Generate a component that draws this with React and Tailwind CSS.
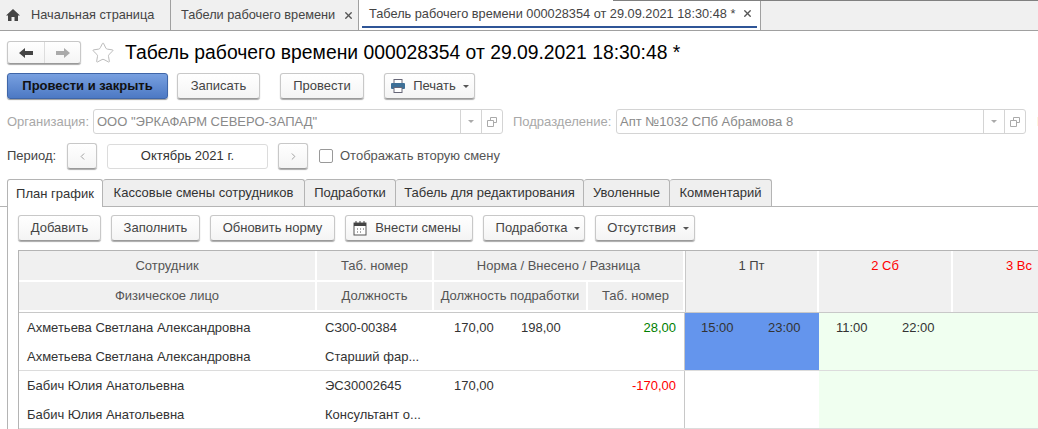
import React from 'react';
import { Star, X, ChevronLeft, ChevronRight } from 'lucide-react';

const Caret = () => (
  <span className="ml-[7px] h-0 w-0 border-x-[3px] border-t-[3px] border-x-transparent border-t-[#555]" />
);

const Btn = ({ w, children, caret }) => (
  <button className={`flex h-[26px] shrink-0 items-center justify-center rounded-[3px] border border-[#c8c8c8] border-b-[#9a9a9a] bg-gradient-to-b from-white to-[#f4f4f4] text-[#444] shadow-[0_1px_1px_#aaa] ${w}`}>
    {children}
    {caret && <Caret />}
  </button>
);

const PrinterIcon = () => (
  <svg width="16" height="14" viewBox="0 0 16 14" className="mr-[7px]">
    <rect x="4" y="0.5" width="8" height="4" fill="#fff" stroke="#667" />
    <rect x="1" y="4" width="14" height="6" rx="1" fill="#3d6f96" />
    <rect x="4" y="8.5" width="8" height="5" fill="#fff" stroke="#667" />
  </svg>
);

const CalendarIcon = () => (
  <svg width="14" height="15" viewBox="0 0 14 15" className="mr-[8px]">
    <rect x="1" y="2" width="12" height="12" fill="#fff" stroke="#555" />
    <rect x="1" y="2" width="12" height="3" fill="#444" />
    <path d="M3 0v3M7 0v3M11 0v3" stroke="#444" strokeWidth="1" />
    <path d="M4 8h1M7 8h1M10 8h1M4 11h1M7 11h1" stroke="#555" strokeWidth="1" />
  </svg>
);

const OpenIcon = () => (
  <svg width="10" height="10" viewBox="0 0 10 10">
    <path d="M3.5 3V.5h6v5H7M.5 3.5h6v6h-6z" fill="none" stroke="#aaa" />
  </svg>
);

const NavArrow = ({ flip, color }) => (
  <svg width="14" height="10" viewBox="0 0 14 10" className={flip ? 'rotate-180' : ''}>
    <path d="M0 5 6 0v3h8v4H6v3z" fill={color} />
  </svg>
);

const Field = ({ w, text }) => (
  <div className={`flex h-[25px] shrink-0 items-center rounded-[3px] border border-[#d4d4d4] text-[#8a8a8a] ${w}`}>
    <span className="flex-1 pl-[3px]">{text}</span>
    <span className="flex h-full w-[21px] items-center justify-center border-l border-[#d4d4d4]">
      <span className="h-0 w-0 border-x-[3px] border-t-[3px] border-x-transparent border-t-[#aaa]" />
    </span>
    <span className="flex h-full w-[21px] items-center justify-center border-l border-[#d4d4d4]">
      <OpenIcon />
    </span>
  </div>
);

const tabs = [
  ['План график', 'w-[96px]'],
  ['Кассовые смены сотрудников', 'w-[202px]'],
  ['Подработки', 'w-[91px]'],
  ['Табель для редактирования', 'w-[188px]'],
  ['Уволенные', 'w-[86px]'],
  ['Комментарий', 'w-[102px]'],
];

const Head = ({ className = '', children }) => (
  <div className={`flex items-center justify-center border-r-2 border-b-2 border-white bg-[#f0f0f0] text-[#555] ${className}`}>
    {children}
  </div>
);

const rows = [
  {
    name: 'Ахметьева Светлана Александровна',
    num: 'СЗ00-00384',
    job: 'Старший фар...',
    norm: '170,00',
    done: '198,00',
    diff: '28,00',
    diffColor: 'text-[#008000]',
    day1: 'bg-[#6495ed]',
    times: true,
  },
  {
    name: 'Бабич Юлия Анатольевна',
    num: 'ЭС30002645',
    job: 'Консультант о...',
    norm: '170,00',
    done: '',
    diff: '-170,00',
    diffColor: 'text-[#ff0000]',
    day1: 'bg-white',
    times: false,
  },
];

const Row = ({ r }) => (
  <div className="flex h-[58px] border-b border-[#dcdcdc] text-[#333]">
    <div className="flex w-[298px] flex-col pl-[8px]">
      <span className="mt-[6px] leading-[17px]">{r.name}</span>
      <span className="mt-[12px] leading-[17px]">{r.name}</span>
    </div>
    <div className="flex w-[118px] flex-col pl-[8px]">
      <span className="mt-[6px] leading-[17px]">{r.num}</span>
      <span className="mt-[12px] leading-[17px]">{r.job}</span>
    </div>
    <div className="flex w-[250px] border-r border-[#c8c8c8]">
      <span className="mt-[6px] w-[60px] pl-[19px] leading-[17px]">{r.norm}</span>
      <span className="mt-[6px] w-[90px] pl-[26px] leading-[17px]">{r.done}</span>
      <span className={`mt-[6px] w-[99px] pr-[8px] text-right leading-[17px] ${r.diffColor}`}>{r.diff}</span>
    </div>
    <div className={`flex w-[134px] shrink-0 ${r.day1}`}>
      {r.times && (
        <>
          <span className="mt-[6px] w-[66px] pl-[16px] leading-[17px]">15:00</span>
          <span className="mt-[6px] pl-[17px] leading-[17px]">23:00</span>
        </>
      )}
    </div>
    <div className="flex flex-1 bg-[#f0fff0]">
      {r.times && (
        <>
          <span className="mt-[6px] w-[66px] pl-[17px] leading-[17px]">11:00</span>
          <span className="mt-[6px] pl-[17px] leading-[17px]">22:00</span>
        </>
      )}
    </div>
  </div>
);

export default function App() {
  return (
    <div className="h-[429px] w-[1038px] overflow-hidden bg-white font-['Liberation_Sans',Arial,sans-serif] text-[13px]">
      {/* Вкладки окна */}
      <div className="relative flex h-[31px] border-b border-[#a0a0a0] bg-[#f0f0f0] text-[12.75px] text-[#444]">
        <div className="absolute top-0 right-0 h-px w-[425px] bg-[#808080]" />
        <div className="flex w-[171px] items-center border-r border-[#a0a0a0] pl-[6px]">
          <svg width="14" height="12" viewBox="0 0 14 12" className="mr-[11px]">
            <path d="M7 0 0 6.5h2V12h3.5V8h3v4H12V6.5h2z" fill="#444" />
          </svg>
          Начальная страница
        </div>
        <div className="flex w-[188px] items-center border-r border-[#a0a0a0] pl-[10px]">
          Табели рабочего времени
          <X size={11} strokeWidth={3} className="ml-[8px] shrink-0 text-[#555]" />
        </div>
        <div className="flex w-[402px] border-r border-[#a0a0a0] bg-white px-[3px] pt-px">
          <div className="flex h-[27px] w-full items-center whitespace-nowrap border-b-2 border-[#2f5597] pl-[7px]">
            Табель рабочего времени 000028354 от 29.09.2021 18:30:48 *
            <X size={11} strokeWidth={3} className="ml-[7px] shrink-0 text-[#555]" />
          </div>
        </div>
      </div>

      {/* Заголовок */}
      <div className="flex h-[42px] items-center pl-[7px] pt-[1px]">
        <div className="flex h-[23px] w-[74px] rounded-[3px] border border-[#c8c8c8] border-b-[#999] bg-gradient-to-b from-white to-[#f4f4f4] shadow-[0_1px_1px_#aaa]">
          <span className="flex w-[37px] items-center justify-center border-r border-[#ddd]">
            <NavArrow color="#444" />
          </span>
          <span className="flex flex-1 items-center justify-center">
            <NavArrow flip color="#aaa" />
          </span>
        </div>
        <Star size={24} strokeWidth={1} className="ml-[10px] text-[#bbb]" />
        <h1 className="ml-[10px] text-[19.33px] leading-none text-black">
          Табель рабочего времени 000028354 от 29.09.2021 18:30:48 *
        </h1>
      </div>

      {/* Команды */}
      <div className="flex h-[26px] pl-[7px]">
        <button className="h-[26px] w-[161px] rounded-[3px] border border-[#3f66a8] bg-gradient-to-b from-[#78a0e0] to-[#4d79c4] font-bold text-[#111] shadow-[0_1px_1px_#999]">
          Провести и закрыть
        </button>
        <div className="ml-[9px]"><Btn w="w-[83px]">Записать</Btn></div>
        <div className="ml-[20px]"><Btn w="w-[84px]">Провести</Btn></div>
        <div className="ml-[20px]">
          <Btn w="w-[91px]" caret><PrinterIcon />Печать</Btn>
        </div>
      </div>

      {/* Организация */}
      <div className="mt-[10px] flex h-[25px] items-center whitespace-nowrap pl-[7px] text-[#a8a8a8]">
        <span className="w-[86px] shrink-0">Организация:</span>
        <Field w="w-[410px]" text='ООО "ЭРКАФАРМ СЕВЕРО-ЗАПАД"' />
        <span className="ml-[10px] w-[103px] shrink-0">Подразделение:</span>
        <Field w="w-[410px]" text="Апт №1032 СПб Абрамова 8" />
        <span className="ml-[11px] shrink-0">П</span>
      </div>

      {/* Период */}
      <div className="mt-[9px] flex h-[26px] items-center pl-[7px]">
        <span className="w-[60px] text-[#444]">Период:</span>
        <Btn w="w-[30px]"><ChevronLeft size={11} className="text-[#999]" /></Btn>
        <div className="ml-[10px] flex h-[25px] w-[161px] items-center justify-center rounded-[3px] border border-[#dcdcdc] text-[#333]">
          Октябрь 2021 г.
        </div>
        <div className="ml-[10px]">
          <Btn w="w-[30px]"><ChevronRight size={11} className="text-[#999]" /></Btn>
        </div>
        <span className="ml-[11px] h-[14px] w-[14px] rounded-[2px] border border-[#999] bg-white" />
        <span className="ml-[7px] text-[#555]">Отображать вторую смену</span>
      </div>

      {/* Вкладки формы */}
      <div className="mt-[10px] flex h-[28px] border-b border-[#b4b4b4] pl-[7px]">
        {tabs.map(([title, w], i) => (
          <div
            key={title}
            className={`flex h-[27px] shrink-0 items-center justify-center rounded-t-[3px] border-t border-r border-[#b4b4b4] text-[#333] ${w} ${i === 0 ? 'h-[28px] border-l bg-white' : 'bg-[#efefef]'}`}
          >
            {title}
          </div>
        ))}
      </div>

      <div className="ml-[7px] h-[230px] border-l border-[#b4b4b4] pl-[10px]">
        <div className="flex gap-[10px] pt-[8px]">
          <Btn w="w-[83px]">Добавить</Btn>
          <Btn w="w-[89px]">Заполнить</Btn>
          <Btn w="w-[125px]">Обновить норму</Btn>
          <Btn w="w-[128px] pr-[4px]"><CalendarIcon />Внести смены</Btn>
          <Btn w="w-[102px] pl-[8px]" caret>Подработка</Btn>
          <Btn w="w-[100px] pl-[6px]" caret>Отсутствия</Btn>
        </div>

        {/* Таблица */}
        <div className="mt-[9px] w-[1030px] border-t border-l border-[#b4b4b4]">
          <div className="flex h-[62px] border-b border-[#c8c8c8]">
            <div className="flex w-[298px] flex-col">
              <Head className="h-[31px]">Сотрудник</Head>
              <Head className="h-[31px]">Физическое лицо</Head>
            </div>
            <div className="flex w-[117px] flex-col">
              <Head className="h-[31px]">Таб. номер</Head>
              <Head className="h-[31px]">Должность</Head>
            </div>
            <div className="flex w-[251px] flex-col">
              <Head className="h-[31px]">Норма / Внесено / Разница</Head>
              <div className="flex h-[31px]">
                <Head className="w-[154px]">Должность подработки</Head>
                <Head className="flex-1">Таб. номер</Head>
              </div>
            </div>
            <div className="flex w-[134px] justify-center border-r-2 border-l border-white border-l-[#c8c8c8] bg-[#f0f0f0] pt-[6px] leading-[17px] text-[#444]">1 Пт</div>
            <div className="flex w-[134px] justify-center border-r-2 border-white bg-[#f0f0f0] pt-[6px] leading-[17px] text-[#ff0000]">2 Сб</div>
            <div className="flex flex-1 bg-[#f0f0f0] pt-[6px] pl-[53px] leading-[17px] text-[#ff0000]">3 Вс</div>
          </div>
          {rows.map((r) => (
            <Row key={r.num} r={r} />
          ))}
        </div>
      </div>
    </div>
  );
}
